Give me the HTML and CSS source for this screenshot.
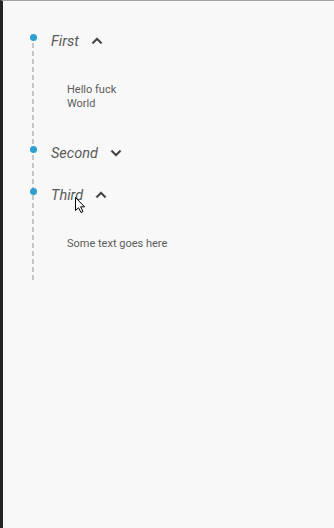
FILE: index.html
```html
<!DOCTYPE html>
<html lang="en">
<head>
    <meta charset="UTF-8">
    <meta name="viewport" content="width=device-width, initial-scale=1.0">
    <title>Timeline</title>
    <link rel="stylesheet" href="styles.css">
</head>
<body>
    <div class="timeline">
        <div class="item open">
            <div class="item-header">
                <span class="dot"></span>
                <span class="title">First</span>
                <svg class="chevron" viewBox="0 0 24 24"><path d="M12 8l-6 6 1.41 1.41L12 10.83l4.59 4.58L18 14z"/></svg>
            </div>
            <div class="item-body">Hello fuck<br>World</div>
        </div>

        <div class="item">
            <div class="item-header">
                <span class="dot"></span>
                <span class="title">Second</span>
                <svg class="chevron" viewBox="0 0 24 24"><path d="M16.59 8.59L12 13.17 7.41 8.59 6 10l6 6 6-6z"/></svg>
            </div>
        </div>

        <div class="item open">
            <div class="item-header">
                <span class="dot"></span>
                <span class="title">Third</span>
                <svg class="chevron" viewBox="0 0 24 24"><path d="M12 8l-6 6 1.41 1.41L12 10.83l4.59 4.58L18 14z"/></svg>
            </div>
            <div class="item-body">Some text goes here</div>
        </div>
    </div>

    <!-- mouse pointer from the capture -->
    <svg class="cursor" viewBox="0 0 11 16"><path d="M0.5 0.5V13.5L3.5 10.7L6 15.5L8 14.5L5.6 9.8H9.6Z"/></svg>
</body>
</html>
```

FILE: styles.css
```css
html, body {
    height: 100%;
}
body {
    margin: 0;
    box-sizing: border-box;
    border-top: 1px solid #a4a4a4;
    border-left: 3px solid #242424;
    background-color: #f8f8f8;
    font-family: Roboto, "Noto Sans", sans-serif;
}
.timeline {
    position: relative;
    display: flex;
    flex-direction: column;
    gap: 18px;
    margin-top: 28px;
    padding-left: 27px;
    padding-bottom: 17px;
}
.timeline::before {
    content: '';
    position: absolute;
    left: 29px;
    top: 14px;
    bottom: 0;
    width: 2px;
    background: repeating-linear-gradient(to bottom, #c6c6c6 0, #c6c6c6 5px, transparent 5px, transparent 8px);
}
.item-header {
    display: flex;
    align-items: flex-start;
    height: 24px;
}
.dot {
    position: relative;
    flex: none;
    width: 7px;
    height: 7px;
    margin-top: 5px;
    border-radius: 50%;
    background-color: #2c9fd1;
}
.title {
    margin-left: 14px;
    padding-top: 1px;
    font-size: 14.5px;
    font-style: italic;
    line-height: 24px;
    color: #5a5a5a;
}
.chevron {
    width: 20px;
    height: 20px;
    margin: 2px 0 0 8px;
    fill: #3c3c3c;
    stroke: #3c3c3c;
    stroke-width: 0.7;
}
.item-body {
    padding: 30px 0 12px 37px;
    font-size: 11px;
    line-height: 14px;
    color: #5c5c5c;
}
.cursor {
    position: absolute;
    left: 75px;
    top: 197px;
    width: 11px;
    height: 16px;
    fill: #fff;
    stroke: #000;
    stroke-width: 1;
}
```
